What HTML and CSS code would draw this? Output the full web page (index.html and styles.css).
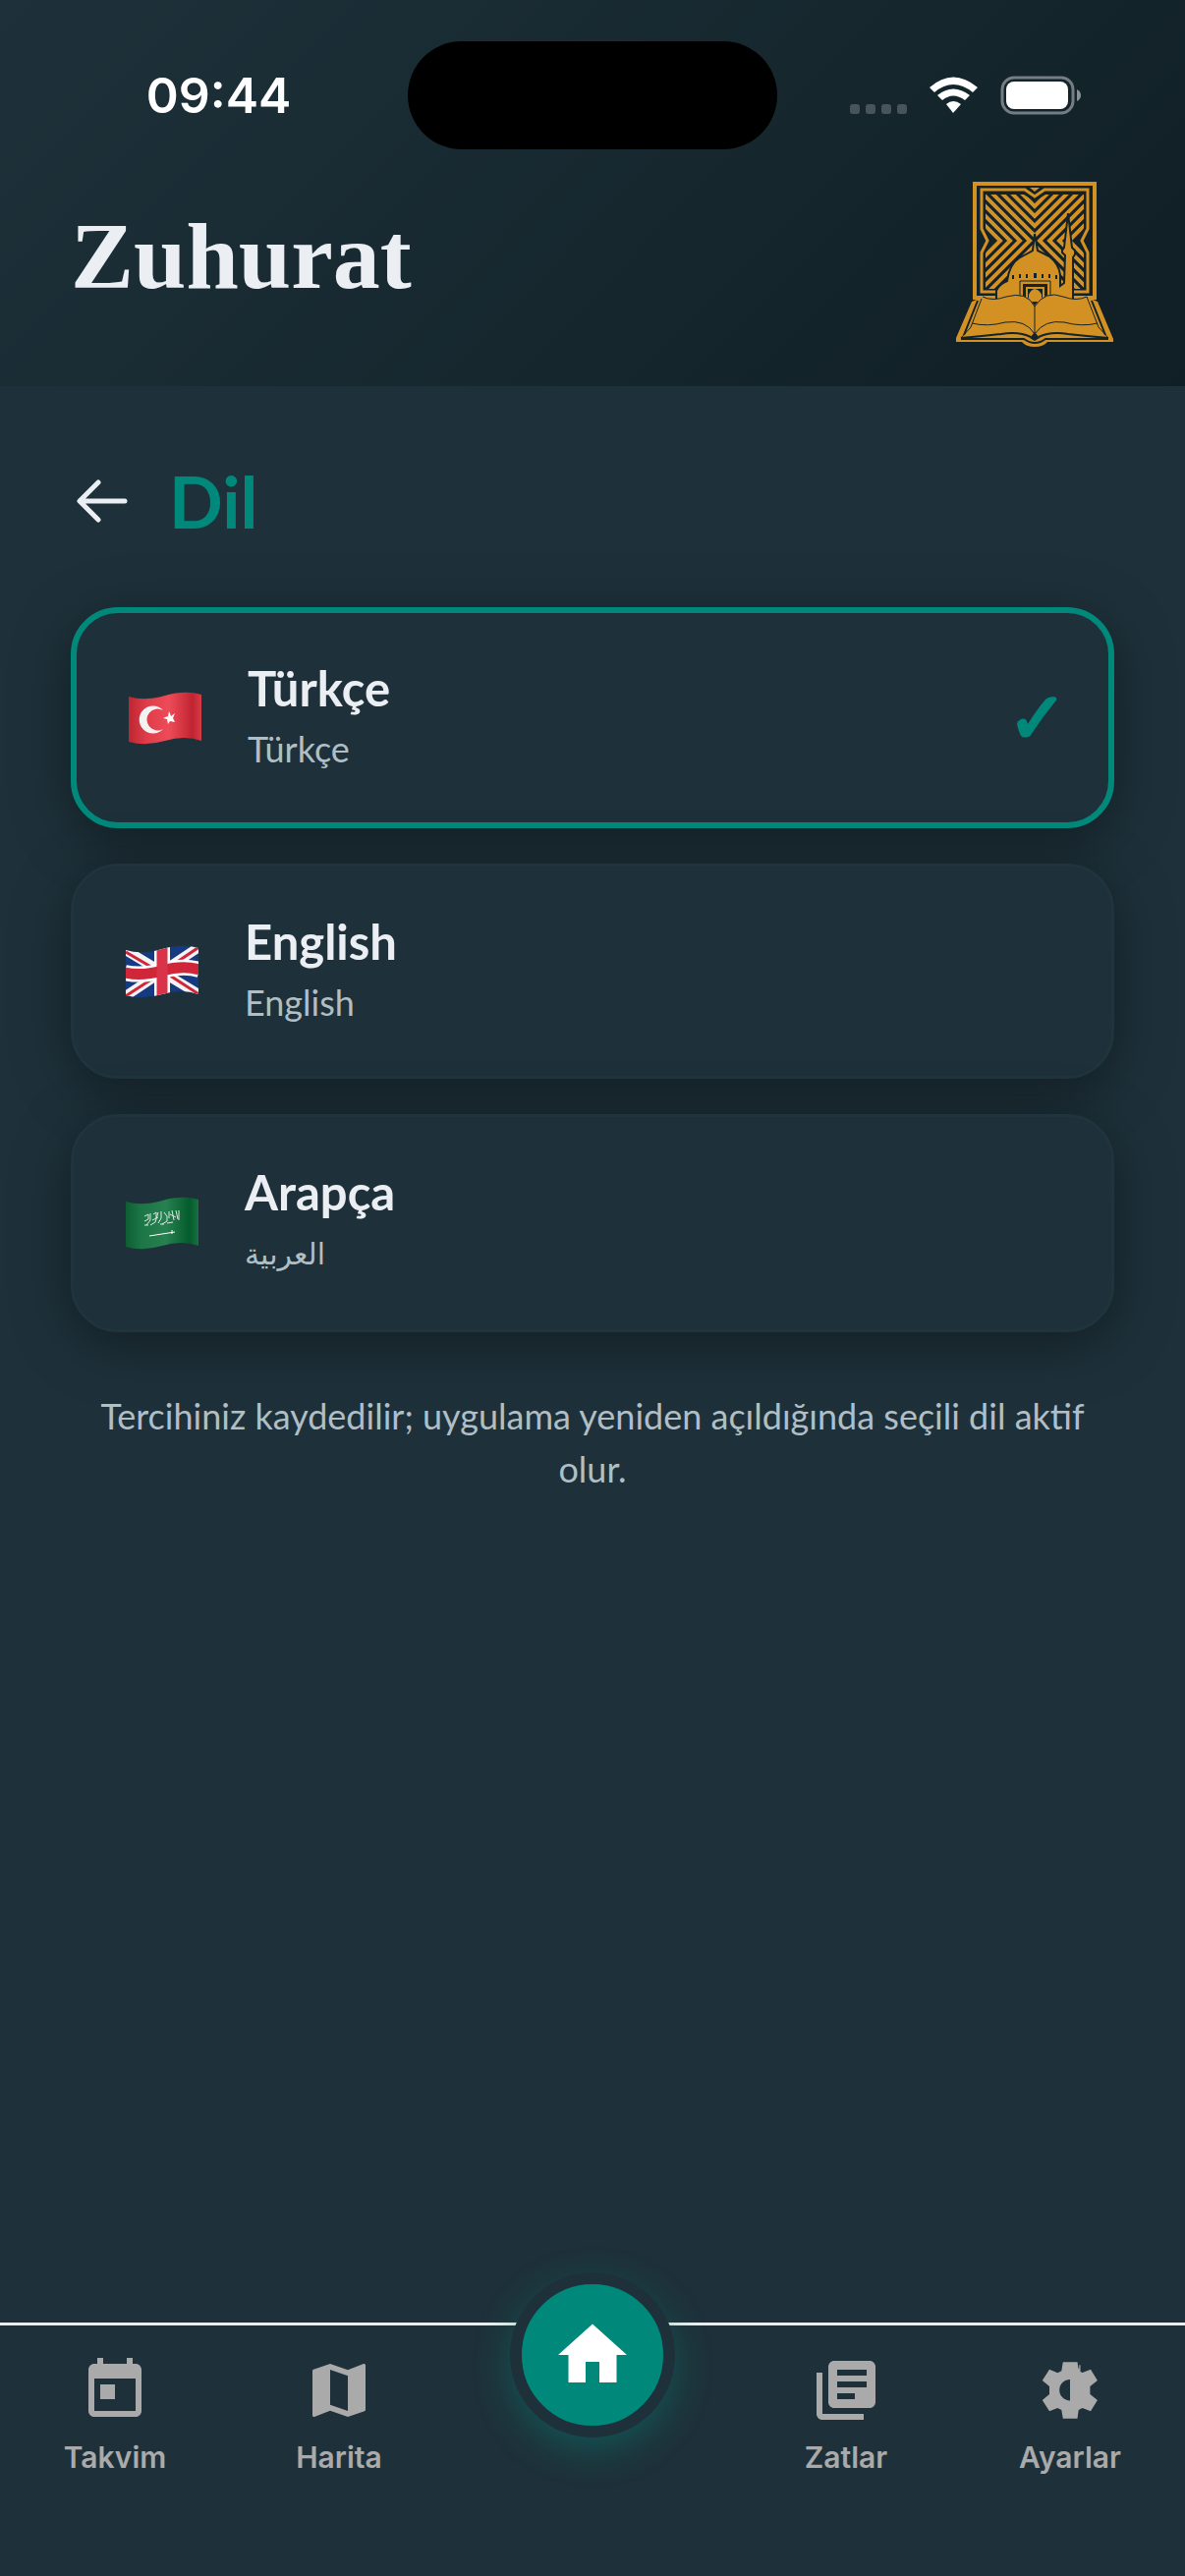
FILE: index.html
```html
<!DOCTYPE html>
<html lang="tr">
  <head>
    <meta charset="UTF-8" />
    <meta name="viewport" content="width=device-width, initial-scale=1.0" />
    <title>Zuhurat - Dil</title>
    <link rel="stylesheet" href="styles.css">
  </head>
  <body>
    <header class="header">
      <div class="status-bar">
        <span class="time">09:44</span>
        <div class="island"></div>
        <div class="status-icons">
          <svg width="236" height="40" viewBox="0 0 236 40">
            <g fill="#47545a">
              <rect x="0" y="29" width="10" height="10" rx="3" />
              <rect x="16" y="29" width="10" height="10" rx="3" />
              <rect x="32" y="29" width="10" height="10" rx="3" />
              <rect x="48" y="29" width="10" height="10" rx="3" />
            </g>
            <g fill="#fff">
              <path d="M81 12Q105 -9 130 12L125 17Q105 1 86 17Z" />
              <path d="M89 20Q105 7 122 20L117 25Q105 16 94 25Z" />
              <path d="M98 29Q105 23 113 29L105 38Z" />
            </g>
            <rect x="155" y="2" width="72" height="36" rx="12" fill="none" stroke="#737d82" stroke-width="3" />
            <rect x="159" y="6" width="63" height="28" rx="8" fill="#fff" />
            <path d="M231 14Q235 16 235 20T231 26Z" fill="#8a9296" />
          </svg>
        </div>
      </div>
      <div class="brand">
        <h1>Zuhurat</h1>
        <svg class="logo" viewBox="0 0 162 168">
          <defs>
            <clipPath id="panel"><path d="M31 13H70L81 20L92 13H131V47L125 60L131 73V109H31V73L37 60L31 47Z" /></clipPath>
          </defs>
          <g fill="none" stroke="#d39023">
            <path d="M20 2H142V118H20Z" stroke-width="4" />
            <path d="M27 8H71L81 15L91 8H135V48L129 60L135 72V112H27V72L33 60L27 48Z" stroke-width="3" />
            <g clip-path="url(#panel)" stroke-width="4">
              <path d="M27 -29L81 25L135 -29M27 -19L81 35L135 -19M27 -9L81 45L135 -9M27 1L81 55L135 1" />
              <path d="M27 11L76 60L27 109M27 21L66 60L27 99M27 31L56 60L27 89M27 41L46 60L27 79" />
              <path d="M135 11L86 60L135 109M135 21L96 60L135 99M135 31L106 60L135 89M135 41L116 60L135 79" />
              <path d="M81 65L27 119M81 75L27 129M81 65L135 119M81 75L135 129" />
            </g>
          </g>
          <path d="M76 6H86L81 10Z" fill="#d39023" />
          <path d="M79 70L81 53L84 70Q88 72 96 76Q106 84 107 95V106L111 103L112 75L109 72V70L111 67L115 32L119 67L122 70V74L120 77V121H42V111Q44 105 53 101Q55 84 66 77Q76 72 79 70Z" fill="#d39023" stroke="#12242a" stroke-width="2" />
          <path d="M58 95h2v4h-2zM65 94h2v4h-2zM72 94h2v4h-2zM80 93h3v5h-3zM88 94h2v4h-2zM95 94h2v4h-2zM102 95h2v4h-2zM69 104H94V122H69Z" fill="#12242a" />
          <path d="M66 118V101H97V118" fill="none" stroke="#12242a" stroke-width="1" />
          <path d="M73 119V108H90V119" fill="none" stroke="#d39023" stroke-width="2" />
          <path d="M75 122V115Q77 110 81 109Q86 110 88 115V122Z" fill="#d39023" />
          <path d="M28 117Q38 122 52 117Q73 111 81 126Q92 110 110 117Q124 122 134 117L138 119L145 122L161 160V163H94Q90 168 81 168Q72 168 68 163H1V159L17 122L24 119Z" fill="#d39023" />
          <g fill="none" stroke="#12242a" stroke-width="1">
            <path d="M28 117Q38 122 52 117Q73 111 81 127Q92 110 110 117Q124 122 134 117M81 126V154M27 119L16 148L6 159M134 117L146 148L156 159M17 144Q33 148 51 143Q72 140 81 155Q91 140 111 143Q129 148 145 144" />
            <path d="M23 121L9 156M139 121L153 156M6 159Q29 157 47 155Q65 152 77 158M156 159Q133 157 115 155Q97 152 85 158M6 160H70Q76 164 81 164Q87 164 92 160H156" stroke-width="2" />
          </g>
          <path d="M81 153L86 159L81 162L76 159Z" fill="#12242a" />
        </svg>
      </div>
    </header>

    <main class="content">
      <div class="page-title">
        <button class="back" aria-label="Geri">
          <svg width="52" height="44" viewBox="0 0 52 44" fill="none" stroke="#ebeef2" stroke-width="5" stroke-linecap="round" stroke-linejoin="round">
            <path d="M22 3L3 22L22 41M4 22H49" />
          </svg>
        </button>
        <h2>Dil</h2>
      </div>

      <div class="languages">
        <button class="card selected" aria-pressed="true">
          <svg class="flag" viewBox="0 0 76 54">
            <defs>
              <linearGradient id="red">
                <stop offset="0" stop-color="#bd2630" />
                <stop offset="0.25" stop-color="#df3d4a" />
                <stop offset="0.55" stop-color="#ee4b58" />
                <stop offset="0.88" stop-color="#c02430" />
                <stop offset="1" stop-color="#d63c48" />
              </linearGradient>
            </defs>
            <path d="M1 5Q17 10 38 4T75 3V50Q58 44 38 50T1 51Z" fill="url(#red)" />
            <path d="M36 19A14 14 0 1 0 36 38A11 11 0 1 1 36 19Z" fill="#f2f2f2" />
            <path d="M42 20L44 25L48 22L46 27L48 31L43 30L41 33L40 28L36 27L41 25Z" fill="#fff" />
          </svg>
          <span class="names">
            <span class="name">Türkçe</span>
            <span class="native">Türkçe</span>
          </span>
          <span class="check">✓</span>
        </button>

        <button class="card" aria-pressed="false">
          <svg class="flag" viewBox="0 0 76 54">
            <defs>
              <clipPath id="wave"><path d="M1 5Q17 10 38 4T75 3V50Q58 44 38 50T1 51Z" /></clipPath>
            </defs>
            <g clip-path="url(#wave)">
              <rect width="76" height="54" fill="#163a80" />
              <path d="M-1 4L77 51M-1 53L77 1" stroke="#f3f3f5" stroke-width="10" />
              <path d="M1 7L30 24M46 31L77 51M-1 53L30 33M46 22L77 1" stroke="#cf2639" stroke-width="3" />
              <path d="M0 28Q17 32 38 26T76 25" fill="none" stroke="#fff" stroke-width="16" />
              <path d="M38 0V54" stroke="#fff" stroke-width="16" />
              <path d="M0 28Q17 32 38 26T76 25" fill="none" stroke="#cf2639" stroke-width="11" />
              <path d="M38 0V54" stroke="#d93349" stroke-width="11" />
            </g>
          </svg>
          <span class="names">
            <span class="name">English</span>
            <span class="native">English</span>
          </span>
        </button>

        <button class="card" aria-pressed="false">
          <svg class="flag" viewBox="0 0 76 54">
            <defs>
              <linearGradient id="green">
                <stop offset="0" stop-color="#0d5e32" />
                <stop offset="0.2" stop-color="#1b7545" />
                <stop offset="0.55" stop-color="#26804f" />
                <stop offset="0.88" stop-color="#045c2c" />
                <stop offset="1" stop-color="#1a7042" />
              </linearGradient>
            </defs>
            <path d="M1 5Q17 10 38 4T75 3V50Q58 44 38 50T1 51Z" fill="url(#green)" />
            <path d="M20 20L24 18V23L20 25M26 17V24L22 29M29 18L32 16V22M34 16L31 26L26 29M37 15V22L34 27M40 16L43 20V25L38 28M45 15V22M48 14L50 24M52 14L54 23M55 14V24M20 29H24M28 24L34 21M36 28H40M43 27L49 26M46 18L52 21" fill="none" stroke="#dce9e0" stroke-width="1" />
            <path d="M25 40Q38 38 51 36M48 34V38" fill="none" stroke="#fff" stroke-width="1" />
          </svg>
          <span class="names">
            <span class="name">Arapça</span>
            <span class="native arabic" lang="ar">العربية</span>
          </span>
        </button>
      </div>

      <p class="hint">Tercihiniz kaydedilir; uygulama yeniden açıldığında seçili dil aktif olur.</p>
    </main>

    <nav class="tab-bar">
      <a class="tab" href="#takvim">
        <svg viewBox="0 0 24 24"><path d="M19 3h-1V1h-2v2H8V1H6v2H5c-1.11 0-1.99.9-1.99 2L3 19c0 1.1.89 2 2 2h14c1.1 0 2-.9 2-2V5c0-1.1-.9-2-2-2zm0 16H5V8h14v11zM7 10h5v5H7z" /></svg>
        <span>Takvim</span>
      </a>
      <a class="tab" href="#harita">
        <svg viewBox="0 0 24 24"><path d="M20.5 3l-.16.03L15 5.1 9 3 3.36 4.9c-.21.07-.36.25-.36.48V20.5c0 .28.22.5.5.5l.16-.03L9 18.9l6 2.1 5.64-1.9c.21-.07.36-.25.36-.48V3.5c0-.28-.22-.5-.5-.5zM15 19l-6-2.11V5l6 2.11V19z" /></svg>
        <span>Harita</span>
      </a>
      <a class="home" href="#home" aria-label="Ana sayfa">
        <svg viewBox="0 0 24 24"><path d="M10 20v-6h4v6h5v-8h3L12 3 2 12h3v8z" /></svg>
      </a>
      <a class="tab" href="#zatlar">
        <svg viewBox="0 0 24 24"><path d="M4 6H2v14c0 1.1.9 2 2 2h14v-2H4V6zm16-4H8c-1.1 0-2 .9-2 2v12c0 1.1.9 2 2 2h12c1.1 0 2-.9 2-2V4c0-1.1-.9-2-2-2zm-5 13H9v-2h6v2zm4-4H9V9h10v2zm0-4H9V5h10v2z" /></svg>
        <span>Zatlar</span>
      </a>
      <a class="tab" href="#ayarlar">
        <svg viewBox="0 0 24 24"><path d="M18.8 13.3V10.7L21.3 8.7 19 4.9 16.2 6 15.5 5.7V3.4H15.1V4.8L14.8 4.4 14.5 2.4H9.6L9.1 5.4 7.8 6.1 5 4.9 2.6 8.7 5 10.7V13.3L2.6 15.3 5 19.1 7.8 18 9.1 18.7 9.6 21.6H14.5L14.9 18.7 16.2 18 19 19.1 21.3 15.3ZM12 15.5A3.6 3.6 0 0 1 12 8.3Z" /></svg>
        <span>Ayarlar</span>
      </a>
    </nav>
  </body>
</html>
```
FILE: styles.css
```css
* {
  box-sizing: border-box;
}

body {
  margin: 0;
  min-height: 100vh;
  display: flex;
  flex-direction: column;
  background-color: #1e313a;
  color: #ebeef2;
  font-family: "Lato", "Liberation Sans", sans-serif;
}

h1,
h2,
p {
  margin: 0;
}

button {
  border: none;
  background: none;
  color: inherit;
  font-family: inherit;
  cursor: pointer;
}

/* header */
.header {
  height: 393px;
  background: linear-gradient(135deg, #1e313a 0%, #16272e 55%, #101e25 100%);
}

.status-bar {
  display: grid;
  grid-template-columns: 1fr 376px 1fr;
  align-items: center;
  padding-top: 42px;
}

.time {
  padding-left: 30px;
  text-align: center;
  color: #fff;
  font-family: "Inter", sans-serif;
  font-size: 50px;
  font-weight: 600;
}

.island {
  height: 110px;
  border-radius: 55px;
  background: #000;
}

.status-icons {
  padding-left: 74px;
}

.status-icons svg {
  display: block;
}

.brand {
  display: flex;
  justify-content: space-between;
  align-items: flex-start;
  padding: 33px 72px 0;
}

.brand h1 {
  font-family: "Liberation Serif", serif;
  font-size: 96px;
  line-height: 152px;
  font-weight: bold;
}

.logo {
  width: 162px;
  height: 168px;
}

/* content */
.content {
  flex: 1;
  padding: 69px 72px 0;
}

.page-title {
  display: flex;
  align-items: center;
  gap: 42px;
  padding-left: 6px;
  margin-bottom: 60px;
}

.back {
  padding: 0;
}

.back svg {
  display: block;
}

.page-title h2 {
  color: #00897b;
  font-size: 72px;
  line-height: 96px;
  font-weight: bold;
}

.languages {
  display: flex;
  flex-direction: column;
  gap: 36px;
}

.card {
  display: flex;
  align-items: center;
  gap: 46px;
  width: 100%;
  padding: 46px 42px 46px 52px;
  border: 3px solid #1f343d;
  border-radius: 48px;
  background-color: #1e313a;
  box-shadow: 0 12px 60px rgba(0, 0, 0, 0.4);
  text-align: left;
}

.card.selected {
  border: 6px solid #00897b;
}

.flag {
  width: 76px;
  height: 54px;
}

.names {
  display: flex;
  flex: 1;
  flex-direction: column;
  align-items: flex-start;
  gap: 4px;
}

.name {
  font-size: 49px;
  line-height: 60px;
  font-weight: bold;
}

.native {
  color: #b0bec5;
  font-size: 36px;
  line-height: 57px;
}

.arabic {
  font-family: "DejaVu Sans", sans-serif;
  font-size: 30px;
  line-height: 60px;
}

.check {
  color: #00897b;
  font-family: "DejaVu Sans", sans-serif;
  font-size: 72px;
  line-height: 72px;
  -webkit-text-stroke: 3px #00897b;
}

.hint {
  margin-top: 58px;
  color: #b0bec5;
  font-size: 36px;
  line-height: 54px;
  text-align: center;
}

/* bottom tabs */
.tab-bar {
  display: grid;
  grid-template-columns: 1fr 1fr 288px 1fr 1fr;
  height: 258px;
  padding: 30px 3px 0;
  border-top: 3px solid #e8eff0;
}

.tab {
  display: flex;
  flex-direction: column;
  align-items: center;
  gap: 14px;
  color: #aaa;
  font-family: "Inter", sans-serif;
  font-size: 30px;
  line-height: 36px;
  font-weight: 600;
  text-decoration: none;
}

.tab svg {
  width: 72px;
  height: 72px;
  fill: currentColor;
}

.home {
  display: flex;
  align-items: center;
  justify-content: center;
  justify-self: center;
  width: 168px;
  height: 168px;
  margin-top: -84px;
  border: 12px solid #1e313a;
  border-radius: 50%;
  background-color: #00897b;
  box-shadow: 0 12px 36px rgba(0, 137, 123, 0.4);
}

.home svg {
  width: 84px;
  height: 84px;
  fill: #fff;
}
```
